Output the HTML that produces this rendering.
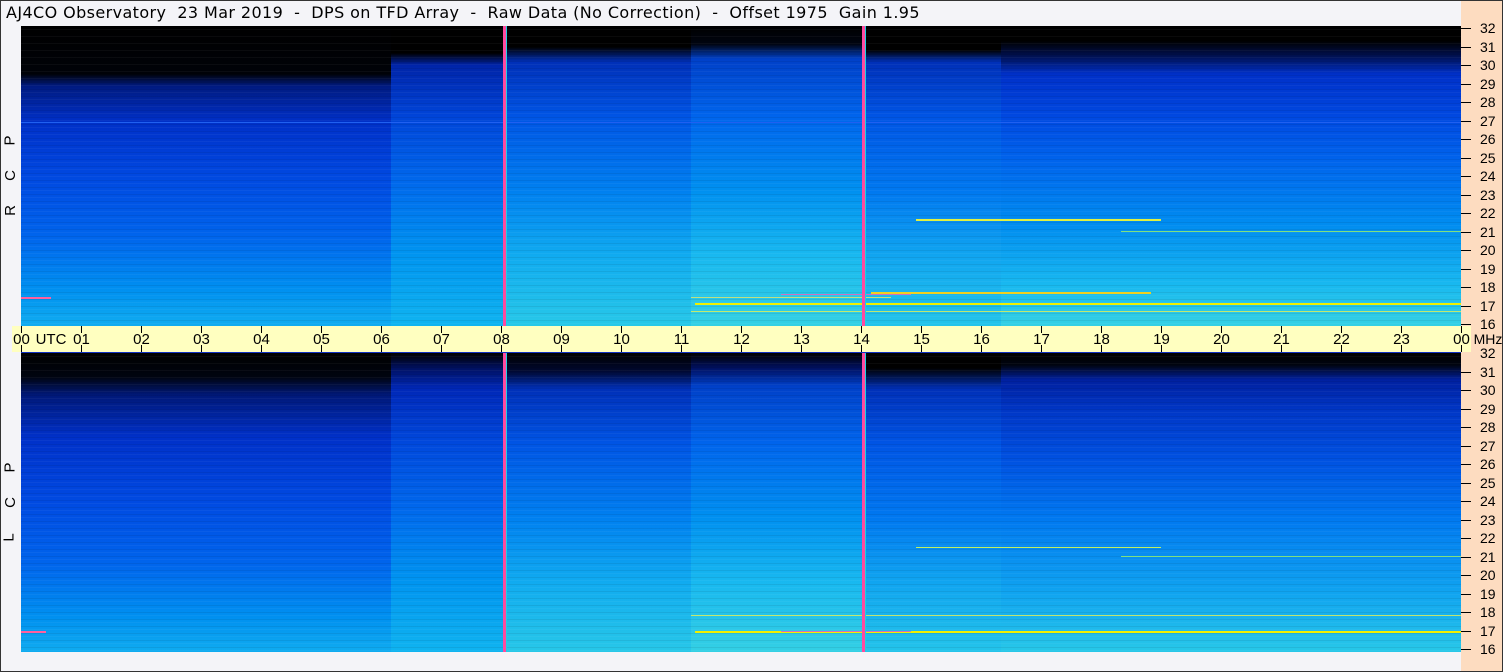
<!DOCTYPE html>
<html><head><meta charset="utf-8"><style>
*{margin:0;padding:0;box-sizing:border-box}
body{width:1503px;height:672px;position:relative;overflow:hidden;background:#f4f4f8;font-family:"Liberation Sans",sans-serif;color:#000}
.frame{position:absolute;left:0;top:0;width:1503px;height:672px;border:1px solid #333;z-index:20;pointer-events:none}
.title{position:absolute;left:6px;top:3px;font-size:16px;white-space:pre;letter-spacing:0.4px;font-family:"DejaVu Sans",sans-serif}
.peach{position:absolute;left:1461px;top:0;width:42px;height:672px;background:#fddcc0}
.plot{position:absolute;left:21px;width:1440px;height:300px;overflow:hidden}
.seg{position:absolute;top:0;height:300px}
.tex{position:absolute;left:0;top:0;width:1440px;height:300px;background:repeating-linear-gradient(180deg,rgba(0,0,0,0.07) 0 1px,transparent 1px 3px,rgba(255,255,255,0.04) 3px 4px,transparent 4px 7px)}
.ln{position:absolute;height:1px}
.v{position:absolute;top:0;height:300px;width:4px;background:linear-gradient(90deg,#ff4aa0 0 3px,#20d0e0 3px 4px)}
.axis{position:absolute;left:12px;top:326px;width:1459px;height:26px;background:#ffffc0}
.tk{position:absolute;width:1px;height:7px;background:#000}
.tl{position:absolute;top:5px;font-size:15px;transform:translateX(-50%)}
.mt{position:absolute;left:1461px;width:10px;height:1px;background:#000}
.ml{position:absolute;left:1480px;font-size:14px;line-height:14px}
.side{position:absolute;left:5px;font-size:15px;transform:rotate(-90deg);transform-origin:center}
</style></head><body>
<div class="title">AJ4CO Observatory  23 Mar 2019  -  DPS on TFD Array  -  Raw Data (No Correction)  -  Offset 1975  Gain 1.95</div>
<div class="peach"></div>

<div class="plot" style="top:26px">
<div class="seg" style="left:0;width:370px;background:linear-gradient(180deg,#000 0,#000208 16%,#001a80 20%,#0030c8 32%,#0048e0 50%,#0064ec 70%,#0090f0 88%,#10acf0 100%)"></div>
<div class="seg" style="left:370px;width:114px;background:linear-gradient(180deg,#000 0,#000 9%,#0024a8 13%,#0044d8 30%,#0068ec 52%,#0094f0 76%,#10b4f0 100%)"></div>
<div class="seg" style="left:484px;width:186px;background:linear-gradient(180deg,#000 0,#000 7%,#0030b8 12%,#0054e4 30%,#0080f0 55%,#10aaf0 76%,#28c8e8 100%)"></div>
<div class="seg" style="left:670px;width:173px;background:linear-gradient(180deg,#000 0,#000410 6%,#0040c8 11%,#0064ec 30%,#0090f0 55%,#18b8f0 76%,#34d0e4 100%)"></div>
<div class="seg" style="left:843px;width:137px;background:linear-gradient(180deg,#000 0,#000 8%,#0030b8 12%,#0054e4 30%,#0078f0 55%,#10a4f0 76%,#24c4ea 100%)"></div>
<div class="seg" style="left:980px;width:460px;background:linear-gradient(180deg,#000 0,#000 5%,#001050 10%,#0030c8 16%,#0048e0 30%,#0064ec 45%,#008cf0 66%,#18b8f0 86%,#34d0e4 100%)"></div>
<div class="tex"></div>
<div class="ln" style="left:0;top:96px;width:1440px;background:#2060f0"></div>
<div class="ln" style="left:670px;top:285px;width:770px;background:#e8f050;opacity:.8"></div>
<div class="ln" style="left:670px;top:271px;width:200px;background:#c0e080"></div>
<div class="ln" style="left:674px;top:277px;width:766px;height:2px;background:#f0f000"></div>
<div class="ln" style="left:760px;top:268px;width:130px;background:#d070c0"></div>
<div class="ln" style="left:850px;top:266px;width:280px;height:2px;background:#f0d020"></div>
<div class="ln" style="left:895px;top:193px;width:245px;height:2px;background:#e0f040"></div>
<div class="ln" style="left:0;top:271px;width:30px;height:2px;background:#ff60a0"></div>
<div class="ln" style="left:1100px;top:205px;width:340px;background:#80e080"></div>
<div class="v" style="left:482px"></div>
<div class="v" style="left:841px"></div>
</div>

<div class="plot" style="top:352px;border-top:1px solid #1030c0">
<div class="seg" style="left:0;width:370px;background:linear-gradient(180deg,#000 0,#000410 8%,#001878 14%,#0030c8 28%,#0048e0 48%,#0064ec 70%,#0090f0 88%,#10acf0 100%)"></div>
<div class="seg" style="left:370px;width:114px;background:linear-gradient(180deg,#000 0,#001060 5%,#0028b8 12%,#0048dc 30%,#0068ec 52%,#0094f0 76%,#10b4f0 100%)"></div>
<div class="seg" style="left:484px;width:186px;background:linear-gradient(180deg,#000 0,#000830 6%,#0030b8 12%,#0054e4 30%,#0080f0 55%,#10aaf0 76%,#28c8e8 100%)"></div>
<div class="seg" style="left:670px;width:173px;background:linear-gradient(180deg,#000 0,#001060 5%,#0040c8 11%,#0064ec 30%,#0090f0 55%,#18b8f0 76%,#34d0e4 100%)"></div>
<div class="seg" style="left:843px;width:137px;background:linear-gradient(180deg,#000 0,#000 5%,#0030b8 12%,#0054e4 30%,#0078f0 55%,#10a4f0 76%,#24c4ea 100%)"></div>
<div class="seg" style="left:980px;width:460px;background:linear-gradient(180deg,#000 0,#000410 4%,#0020a0 9%,#0038c8 20%,#0050e0 35%,#0078f0 55%,#10a4f0 80%,#28c8e8 100%)"></div>
<div class="tex"></div>
<div class="ln" style="left:670px;top:262px;width:770px;background:#e8f050;opacity:.8"></div>
<div class="ln" style="left:674px;top:278px;width:766px;height:2px;background:#f0f000"></div>
<div class="ln" style="left:760px;top:278px;width:130px;background:#d070c0"></div>
<div class="ln" style="left:895px;top:194px;width:245px;background:#c0f060"></div>
<div class="ln" style="left:0;top:278px;width:25px;height:2px;background:#ff60a0"></div>
<div class="ln" style="left:1100px;top:203px;width:340px;background:#80e080"></div>
<div class="v" style="left:482px"></div>
<div class="v" style="left:841px"></div>
</div>

<div class="axis"></div>
<div id="ax"></div>
<div class="side" style="top:132px">P</div>
<div class="side" style="top:167px">C</div>
<div class="side" style="top:202px">R</div>
<div class="side" style="top:459px">P</div>
<div class="side" style="top:494px">C</div>
<div class="side" style="top:529px">L</div>
<div class="frame"></div>
<script>
var h='';
for(var i=0;i<=24;i++){var x=21+i*60;
h+='<div class="tk" style="left:'+x+'px;top:326px"></div><div class="tk" style="left:'+x+'px;top:345px"></div>';
var t=i==24?'00':(i<10?'0'+i:''+i);
h+='<div class="tl" style="left:'+(x+0.5)+'px;top:331px">'+t+'</div>';}
h+='<div class="tl" style="left:51px;top:331px">UTC</div><div class="tl" style="left:1488px;top:331px;font-size:14px">MHz</div>';
for(var k=0;k<=16;k++){var f=32-k;
var y1=Math.round(28+k*18.5),y2=Math.round(353+k*18.5);
h+='<div class="mt" style="top:'+y1+'px"></div><div class="ml" style="top:'+(y1-7)+'px">'+f+'</div>';
if(k>0)h+='<div class="mt" style="top:'+y2+'px"></div><div class="ml" style="top:'+(y2-7)+'px">'+f+'</div>';
else h+='<div class="ml" style="top:'+(y2-7)+'px">'+f+'</div>';}
document.getElementById('ax').innerHTML=h;
</script>
</body></html>
